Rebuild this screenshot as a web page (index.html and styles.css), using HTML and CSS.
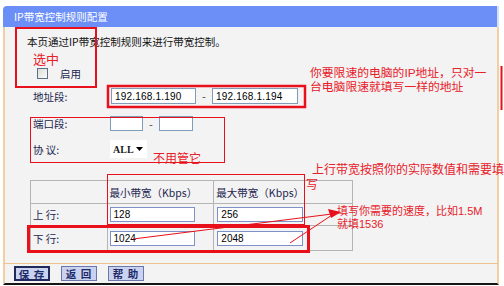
FILE: index.html
```html
<!DOCTYPE html>
<html lang="zh-CN">
<head>
<meta charset="utf-8">
<title>IP带宽控制规则配置</title>
<link rel="stylesheet" href="styles.css">
</head>
<body>
<div class="page">
  <div class="panel">
    <div class="titlebar">IP带宽控制规则配置</div>
    <div class="content">
      <p class="intro">本页通过IP带宽控制规则来进行带宽控制。</p>
      <div class="row enable"><span class="checkbox"></span><span class="enable-label">启用</span></div>
      <div class="row addr"><span class="label">地址段:</span><span class="txt ip">192.168.1.190</span><span class="dash">-</span><span class="txt ip">192.168.1.194</span></div>
      <div class="row port"><span class="label">端口段:</span><span class="txt short"></span><span class="dash">-</span><span class="txt short"></span></div>
      <div class="row proto"><span class="label">协 议:</span><span class="select">ALL<svg class="caret" width="7" height="4" viewBox="0 0 7 4"><path d="M0 0h7L3.5 4z" fill="#000"/></svg></span></div>
      <table class="bw">
        <tr class="head"><td class="c1"></td><td class="c2">最小带宽（Kbps）</td><td class="c3">最大带宽（Kbps）</td></tr>
        <tr class="up"><td class="c1">上 行:</td><td class="c2"><span class="txt cell">128</span></td><td class="c3"><span class="txt cell wide">256</span></td></tr>
        <tr class="down"><td class="c1">下 行:</td><td class="c2"><span class="txt cell">1024</span></td><td class="c3"><span class="txt cell wide">2048</span></td></tr>
      </table>
    </div>
    <div class="footer">
      <button class="btn focus">保 存</button>
      <button class="btn">返 回</button>
      <button class="btn">帮 助</button>
    </div>
  </div>

  <svg class="marks" width="504" height="286" viewBox="0 0 504 286">
    <g fill="none" stroke="#e8101a">
      <rect x="16" y="28" width="80" height="59" stroke-width="2"/>
      <rect x="108" y="86" width="197" height="21" stroke-width="2.5"/>
      <rect x="30.5" y="117.5" width="194" height="45" stroke-width="1"/>
      <rect x="107.5" y="174.5" width="197" height="50" stroke-width="1"/>
      <rect x="28.5" y="226.5" width="280" height="25" stroke-width="3"/>
      <line x1="133" y1="239" x2="332" y2="214" stroke-width="1"/>
      <line x1="290" y1="243" x2="332" y2="215" stroke-width="1"/>
      <line x1="501.5" y1="66" x2="501.5" y2="110" stroke-width="2"/>
    </g>
    <path d="M341 212 L328 209 L331 218 Z" fill="#e8101a"/>
  </svg>
  <div class="note n-select">选中</div>
  <div class="note n-ip">你要限速的电脑的IP地址，只对一<br>台电脑限速就填写一样的地址</div>
  <div class="note n-ignore">不用管它</div>
  <div class="note n-up">上行带宽按照你的实际数值和需要填</div>
  <div class="note n-up2">写</div>
  <div class="note n-speed">填写你需要的速度，比如1.5M<br>就填1536</div>
</div>
</body>
</html>
```

FILE: styles.css
```css
* { box-sizing: border-box; }
html, body { margin: 0; padding: 0; background: #fff; }
body {
  font-family: "Noto Sans CJK SC", "Liberation Sans", sans-serif;
  font-size: 11px;
  color: #1a1a1a;
}
.page { position: relative; width: 504px; height: 286px; overflow: hidden; }

.panel { margin: 6px 0 0 3px; width: 496px; }
.titlebar {
  height: 21px;
  line-height: 21px;
  padding-left: 11px;
  background: #6b8ff6;
  color: #fff;
  font-size: 10.5px;
  border-radius: 4px 0 0 0;
  border-right: 2px solid #cfe0fb;
}
.content {
  height: 236px;
  background: #f3f3f3;
  border-left: 2px solid #f2cfa3;
  border-right: 2px solid #f2cfa3;
  padding-top: 7px;
}
.intro { margin: 0; height: 16px; line-height: 16px; padding-left: 22px; font-size: 10.5px; color: #111; }

.row { display: flex; align-items: center; }
.enable { margin-top: 17px; height: 13px; padding-left: 32px; }
.checkbox {
  width: 11px; height: 11px;
  border: 1px solid #5a6f88;
  background: linear-gradient(135deg, #dcdcd6, #fbfbf9);
}
.enable-label { margin-left: 12px; color: #1c2550; font-size: 10.5px; }

.label { width: 78px; color: #1c2550; font-size: 10.5px; }
.addr { margin-top: 8px; height: 16px; padding-left: 28px; }
.port { margin-top: 12px; height: 15px; padding-left: 28px; }
.proto { margin-top: 9px; height: 18px; padding-left: 28px; }
.port .label, .proto .label { width: 77px; }

.txt {
  display: flex; align-items: center;
  background: #fff;
  border: 1px solid #7f9db9;
  font-family: "Liberation Sans", sans-serif;
  font-size: 10px;
  color: #000;
  padding-left: 3px;
}
.ip { width: 85px; height: 16px; letter-spacing: 0.2px; }
.addr .txt:last-child { width: 86px; }
.short { width: 33px; height: 15px; }
.port .txt:last-child { width: 34px; }
.dash { width: 16px; text-align: center; color: #444; }
.select {
  width: 37px; height: 18px;
  display: flex; align-items: center; justify-content: space-between;
  background: #fff;
  padding: 0 4px 0 3px;
  font-family: "Liberation Serif", serif;
  font-size: 10px;
  font-weight: bold;
}

.bw {
  margin: 22px 0 0 25px;
  border-collapse: collapse;
  width: 323px;
  font-size: 10.5px;
  color: #1c2550;
}
.bw td { border: 1px solid #b4b4b4; padding: 0; }
.bw .c1 { width: 77px; padding-left: 2px; }
.bw .c2 { width: 107px; padding-left: 2px; }
.bw .c3 { width: 139px; padding-left: 3px; }
.head td { height: 23px; }
.head .c2, .head .c3 { padding-left: 2px; }
.up td { height: 22px; }
.down td { height: 25px; }
.cell { width: 85px; height: 15px; border-color: #7d91c8; }
.cell.wide { width: 86px; }

.footer {
  height: 22px;
  background: #f3f3f3;
  border-top: 1px solid #efc38f;
  border-left: 2px solid #f2cfa3;
  border-right: 2px solid #f2cfa3;
  border-bottom: 2px solid #151515;
  display: flex; align-items: center; gap: 11px;
  padding: 0 0 1px 9px;
}
.btn {
  width: 36px; height: 15px;
  margin: 0; padding: 0;
  border: 1px solid #6a77a8;
  background: #c9d2ef;
  color: #1d2a6a;
  font-family: "Noto Sans CJK SC", sans-serif;
  font-size: 10.5px;
  font-weight: bold;
  line-height: 13px;
  letter-spacing: 1px;
}
.btn.focus { border: 2px solid #20295a; }

.marks { position: absolute; left: 0; top: 0; pointer-events: none; }
.note {
  position: absolute;
  color: #e8202a;
  font-family: "Liberation Sans", "Noto Sans CJK SC", sans-serif;
  font-size: 12px;
  line-height: 15px;
  white-space: nowrap;
}
.n-select { left: 33px; top: 52px; font-size: 13px; }
.n-ip { left: 310px; top: 66px; font-size: 11.8px; line-height: 14px; }
.n-ignore { left: 153px; top: 152px; }
.n-up { left: 312px; top: 163px; }
.n-up2 { left: 306px; top: 178px; }
.n-speed { left: 337px; top: 205px; font-size: 11px; line-height: 13px; }
```
